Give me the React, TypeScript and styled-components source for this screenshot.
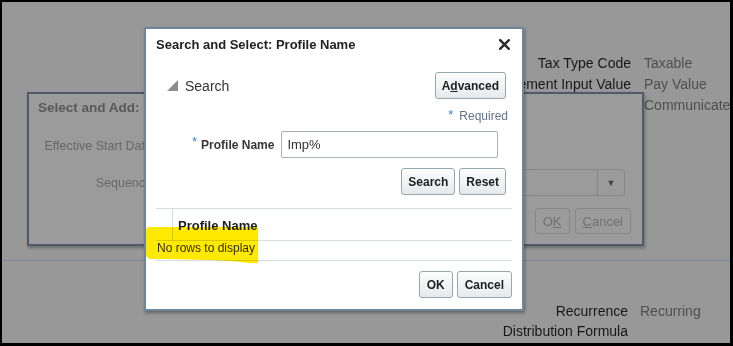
import React from 'react';
import styled, {createGlobalStyle} from "styled-components";

const GlobalStyle = createGlobalStyle`
  body {
    margin: 0;
    font-family: "Liberation Sans", Arial, sans-serif;
  }
`

const CloseIcon = () => (
    <svg width="11" height="11" viewBox="0 0 11 11">
        <path d="M1.2 1.2 L9.8 9.8 M9.8 1.2 L1.2 9.8" stroke="#2b2b2b" strokeWidth="2.4" strokeLinecap="square"/>
    </svg>
)

const Disclosure = () => (
    <svg width="11" height="11" viewBox="0 0 11 11">
        <polygon points="11,0 11,11 0,11" fill="#8c8c8c"/>
    </svg>
)

const App = () => {
    return (
        <>
            <GlobalStyle/>
            <Frame>
                <Page>
                    <DetailGrid $label={629} $gap={13} $row={21}>
                        <Label>Tax Type Code</Label><Value>Taxable</Value>
                        <Label>Element Input Value</Label><Value>Pay Value</Value>
                        <Label>Message</Label><Value>Communicate</Value>
                    </DetailGrid>
                    <Rule/>
                    <DetailGrid $label={626} $gap={12} $row={20}>
                        <Label>Recurrence</Label><Value>Recurring</Value>
                        <Label>Distribution Formula</Label><Value></Value>
                    </DetailGrid>
                </Page>

                <BackDialog>
                    <BackTitle>Select and Add:</BackTitle>
                    <BackForm>
                        <BackLabel>Effective Start Date</BackLabel>
                        <BackField $width={170}/>
                        <BackLabel>Sequence</BackLabel>
                        <BackSelect>
                            <BackArrow>▼</BackArrow>
                        </BackSelect>
                    </BackForm>
                    <BackButtons>
                        <BackButton>O<u>K</u></BackButton>
                        <BackButton><u>C</u>ancel</BackButton>
                    </BackButtons>
                </BackDialog>

                <Dialog>
                    <DialogHeader>
                        <DialogTitle>Search and Select: Profile Name</DialogTitle>
                        <CloseIcon/>
                    </DialogHeader>
                    <DialogBody>
                        <SearchBar>
                            <SearchToggle>
                                <Disclosure/>
                                <span>Search</span>
                            </SearchToggle>
                            <Button $pad={6}>A<u>d</u>vanced</Button>
                        </SearchBar>
                        <Required><Star>*</Star>Required</Required>
                        <FieldRow>
                            <Star>*</Star>
                            <FieldLabel>Profile Name</FieldLabel>
                            <TextInput readOnly value="Imp%"/>
                        </FieldRow>
                        <ButtonRow $right={6}>
                            <Button $pad={6}>Search</Button>
                            <Button $pad={6}>Reset</Button>
                        </ButtonRow>
                        <Table>
                            <HeaderRow>
                                <SpacerCell/>
                                <HeaderCell>Profile Name</HeaderCell>
                            </HeaderRow>
                            <EmptyRow>No rows to display</EmptyRow>
                        </Table>
                        <ButtonRow $right={0}>
                            <Button $pad={7}>OK</Button>
                            <Button $pad={7}>Cancel</Button>
                        </ButtonRow>
                    </DialogBody>
                </Dialog>

                <Highlight width="113" height="37" viewBox="0 0 113 37">
                    <path d="M3 0 L112 0 L112 36 C104 36.5 96 35.5 90 34.5 C70 33 40 32 5 32 C2 32 0 30 0 28 L0 3 C0 1 1 0 3 0 Z" fill="#ffe900"/>
                </Highlight>
            </Frame>
        </>
    );
};

const Frame = styled.div`
  position: relative;
  box-sizing: border-box;
  width: 733px;
  height: 346px;
  border-style: solid;
  border-color: #000;
  border-width: 2px 3px 3px 2px;
  background: #989898;
  overflow: hidden;
`
const Page = styled.div`
  display: flex;
  flex-direction: column;
  padding-top: 51px;
`
const DetailGrid = styled.div<{ $label: number; $gap: number; $row: number }>`
  display: grid;
  grid-template-columns: ${p => p.$label}px auto;
  column-gap: ${p => p.$gap}px;
  line-height: ${p => p.$row}px;
  font-size: 14px;
  white-space: nowrap;
`
const Label = styled.div`
  text-align: right;
  color: #181818;
`
const Value = styled.div`
  color: #4f4f4f;
`
const Rule = styled.div`
  margin: 144px 0 40px;
  border-top: 1px solid #7f8a94;
`

const BackDialog = styled.div`
  position: absolute;
  left: 25px;
  top: 90px;
  box-sizing: border-box;
  width: 617px;
  height: 154px;
  display: flex;
  flex-direction: column;
  padding: 5px 11px 0 9px;
  background: #9b9b9b;
  border: 2px solid #4e5c69;
  box-shadow: 1px 2px 3px rgba(0, 0, 0, 0.3);
`
const BackTitle = styled.div`
  font-weight: 700;
  font-size: 13.5px;
  line-height: 18px;
  color: #595959;
`
const BackForm = styled.div`
  display: grid;
  grid-template-columns: 114px 1fr;
  grid-auto-rows: 27px;
  column-gap: 12px;
  row-gap: 10px;
  align-items: center;
  margin-top: 15px;
`
const BackLabel = styled.div`
  text-align: right;
  font-size: 12.5px;
  color: #676767;
  white-space: nowrap;
`
const BackField = styled.div<{ $width: number }>`
  width: ${p => p.$width}px;
  height: 27px;
  box-sizing: border-box;
  border: 1px solid #868686;
  border-radius: 3px;
`
const BackSelect = styled.div`
  height: 27px;
  width: 461px;
  box-sizing: border-box;
  border: 1px solid #868686;
  border-radius: 3px;
  display: flex;
  justify-content: flex-end;
`
const BackArrow = styled.div`
  width: 26px;
  border-left: 1px solid #868686;
  display: flex;
  align-items: center;
  justify-content: center;
  font-size: 9px;
  color: #444;
`
const BackButtons = styled.div`
  display: flex;
  justify-content: flex-end;
  gap: 5px;
  margin-top: 12px;
`
const BackButton = styled.div`
  height: 26px;
  box-sizing: border-box;
  padding: 0 7px;
  display: flex;
  align-items: center;
  border: 1px solid #878787;
  border-radius: 3px;
  font-size: 13px;
  color: #717171;
`

const Dialog = styled.div`
  position: absolute;
  left: 142px;
  top: 25px;
  box-sizing: border-box;
  width: 380px;
  height: 284px;
  display: flex;
  flex-direction: column;
  background: #fff;
  border: 2px solid #6e869a;
  box-shadow: 1px 2px 3px rgba(0, 0, 0, 0.35);
`
const DialogHeader = styled.div`
  height: 30px;
  display: flex;
  align-items: center;
  justify-content: space-between;
  padding: 0 12px 0 10px;
`
const DialogTitle = styled.div`
  font-weight: 700;
  font-size: 13px;
  color: #222;
`
const DialogBody = styled.div`
  display: flex;
  flex-direction: column;
  padding: 0 10px;
`
const SearchBar = styled.div`
  display: flex;
  align-items: center;
  justify-content: space-between;
  margin-top: 13px;
  padding: 0 6px 0 11px;
`
const SearchToggle = styled.div`
  display: flex;
  align-items: center;
  gap: 7px;
  font-size: 14px;
  color: #333;
`
const Button = styled.div<{ $pad: number }>`
  height: 27px;
  box-sizing: border-box;
  padding: 0 ${p => p.$pad}px;
  display: flex;
  align-items: center;
  background: linear-gradient(#fdfdfd, #e6e9ec);
  border: 1px solid #99a5af;
  border-radius: 3px;
  font-weight: 700;
  font-size: 12px;
  color: #1e1e1e;
`
const Required = styled.div`
  display: flex;
  justify-content: flex-end;
  gap: 6px;
  margin-top: 10px;
  padding-right: 4px;
  line-height: 14px;
  font-size: 12px;
  color: #5f7486;
`
const Star = styled.span`
  align-self: flex-start;
  font-size: 13px;
  line-height: 12px;
  color: #3a87c8;
`
const FieldRow = styled.div`
  display: flex;
  align-items: center;
  margin-top: 8px;
  padding-left: 36px;
  & > ${Star} {
    margin-top: 5px;
    margin-right: 4px;
  }
`
const FieldLabel = styled.label`
  font-weight: 700;
  font-size: 12px;
  color: #363636;
  margin-right: 7px;
`
const TextInput = styled.input`
  width: 217px;
  height: 27px;
  box-sizing: border-box;
  padding: 0 5px;
  border: 1px solid #a3afb9;
  border-radius: 2px;
  font-family: "Liberation Sans", Arial, sans-serif;
  font-size: 13px;
  color: #333;
  outline: none;
`
const ButtonRow = styled.div<{ $right: number }>`
  display: flex;
  justify-content: flex-end;
  gap: 4px;
  margin-top: 10px;
  padding-right: ${p => p.$right}px;
`
const Table = styled.div`
  margin-top: 13px;
  border-top: 1px solid #d6dde3;
`
const HeaderRow = styled.div`
  display: flex;
  height: 31px;
  border-bottom: 1px solid #d6dde3;
`
const SpacerCell = styled.div`
  width: 16px;
  border-right: 1px solid #d6dde3;
`
const HeaderCell = styled.div`
  display: flex;
  align-items: flex-end;
  padding: 0 0 7px 5px;
  font-weight: 700;
  font-size: 13px;
  color: #1e1e1e;
`
const EmptyRow = styled.div`
  height: 19px;
  line-height: 15px;
  padding-left: 1px;
  border-bottom: 1px solid #d6dde3;
  font-size: 12px;
  color: #333;
`
const Highlight = styled.svg`
  position: absolute;
  left: 144px;
  top: 225px;
  mix-blend-mode: multiply;
`

export default App;
